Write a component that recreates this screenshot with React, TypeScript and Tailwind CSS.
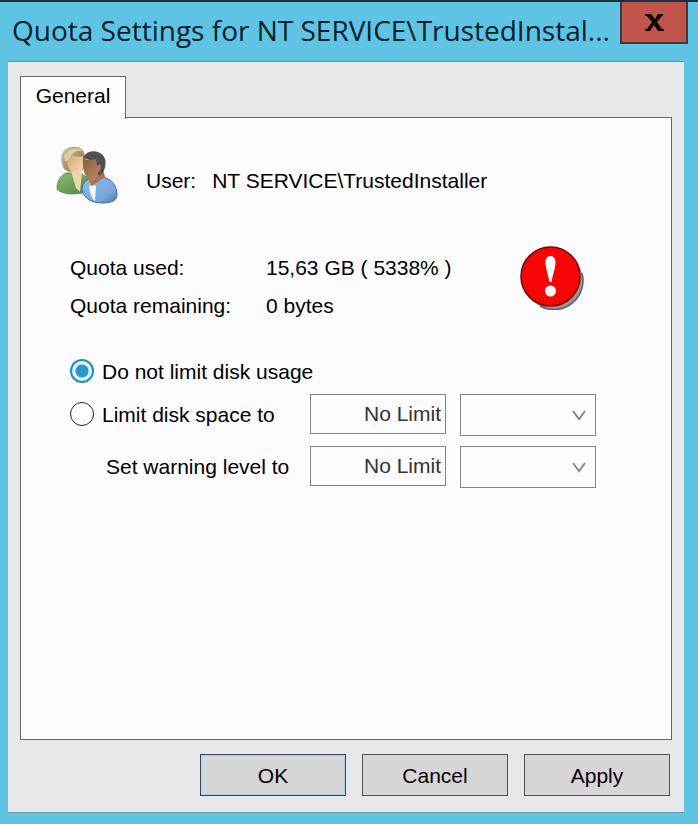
import { useState } from 'react';

const limits = [
  { id: 'limit', label: 'Limit disk space to' },
  { id: 'warning', label: 'Set warning level to' },
];

const UsersIcon = () => (
  <svg viewBox="0 0 62 58" className="h-[58px] w-[62px] shrink-0" aria-hidden="true">
    <defs>
      <linearGradient id="hair" x1="0" y1="0" x2="1" y2="1">
        <stop offset="0" stopColor="#d9c592" />
        <stop offset="1" stopColor="#80683a" />
      </linearGradient>
      <linearGradient id="face" x1="0" y1="0" x2="1" y2="1">
        <stop offset="0" stopColor="#d6a878" />
        <stop offset="1" stopColor="#f6ddb9" />
      </linearGradient>
      <linearGradient id="green" x1="0" y1="0" x2="1" y2="1">
        <stop offset="0" stopColor="#94b979" />
        <stop offset="1" stopColor="#4a8a3d" />
      </linearGradient>
      <linearGradient id="skin" x1="0" y1="0" x2="1" y2="1">
        <stop offset="0" stopColor="#8b5d3e" />
        <stop offset="1" stopColor="#bd8b66" />
      </linearGradient>
      <linearGradient id="blue" x1="0" y1="0" x2="1" y2="1">
        <stop offset="0" stopColor="#8dbbe8" />
        <stop offset="0.7" stopColor="#78a8da" />
        <stop offset="1" stopColor="#4a76ab" />
      </linearGradient>
    </defs>
    <path d="M7 21C4 13 5 6 10 3c5-3 13-3 17 1 2 5 2 13 0 20l-13 2c-3-1-6-2-7-5Z" fill="url(#hair)" />
    <path d="M1 43c0-8 3-13 9-16l14 0 8 5-2 14c-9 3-24 3-29-3Z" fill="url(#green)" stroke="#4c803f" strokeWidth="0.8" />
    <path d="m15 25 5 17 4 4 2-20Z" fill="#e9d8ad" />
    <path d="M11 15c3-1 4-3 5-6 3 2 7 2 11 1v10c0 5-3 8-7 8-5 0-9-7-9-13Z" fill="url(#face)" />
    <path d="M8 10c3-7 13-10 20-5-6-1-11 1-13 5-1 3-3 5-6 5Z" fill="#d8cfaa" />
    <path d="M26 44c0-6 3-9 7-11l14-2c9 2 14 9 14 18 0 5-5 8-14 8-11 0-19-4-21-13Z" fill="url(#blue)" stroke="#456b96" strokeWidth="1" />
    <path d="m33 37 7 3-1 15c-4-3-6-10-6-18Z" fill="#f4f9ff" />
    <path d="m32 27 2 12 2 1 13-9-2-8Z" fill="#a87554" />
    <path d="M27 12c2-6 9-8 15-6 6 2 9 8 7 15-1 5-3 7-6 9l-6-15Z" fill="#54504e" />
    <path d="M27 12c5 3 9 2 13 1l1 7 3-2c2 4 0 7-2 8-1 5-3 8-6 9-7-1-10-13-9-23Z" fill="url(#skin)" />
  </svg>
);

const ErrorIcon = () => (
  <svg viewBox="0 0 64 64" className="size-16 shrink-0" role="img" aria-label="Quota exceeded">
    <circle cx="34" cy="34.5" r="29" fill="#9c9393" />
    <path d="M62 27a29 29 0 0 1-42 33" fill="none" stroke="#625e68" strokeWidth="1.5" />
    <circle cx="30.5" cy="30.5" r="29.5" fill="#f70505" stroke="#700808" strokeWidth="1.5" />
    <path d="M25.5 16c0-8 10-8 10 0 0 7-3 13-4 20h-2c-1-7-4-13-4-20Z" fill="#fff" />
    <circle cx="30.5" cy="45" r="5.5" fill="#fff" />
  </svg>
);

const App = () => {
  const [mode, setMode] = useState('none');

  const radio = (value: string) => (
    <input
      type="radio"
      id={value}
      name="mode"
      checked={mode === value}
      onChange={() => setMode(value)}
      className="size-6 shrink-0 appearance-none rounded-full border border-[#222] bg-white checked:border-2 checked:border-[#238fb5] checked:bg-[radial-gradient(circle,#249bcb_0px,#249bcb_6px,#e3f1fa_7px)]"
    />
  );

  return (
    <main className="flex min-h-screen flex-col border-t-2 border-[#17313d] bg-[#5fc4e4] pr-3.5 pb-[11px] pl-2 font-['Liberation_Sans',Arial,sans-serif] text-[21px] leading-7 text-black">
      <header className="-mr-1 flex h-[59px] shrink-0 items-start justify-between">
        <h1 className="min-w-0 truncate pt-1.5 pl-1 font-['Open_Sans','Noto_Sans',sans-serif] text-[28px] leading-11 text-[#06202c]">
          Quota Settings for NT SERVICE\TrustedInstal...
        </h1>
        <button
          type="button"
          aria-label="Close"
          className="flex h-[42px] w-[68px] shrink-0 items-center justify-center border-2 border-t-0 border-[#45373c] bg-[#c1554b]"
        >
          <svg viewBox="0 0 19 17" className="h-[17px] w-[19px]" aria-hidden="true">
            <path d="M0 0h6l4 5 3-5h5v2h-1l-5 6 5 7h2v2h-6l-4-6-4 6H0v-2h2l5-7-5-6H0Z" fill="#080505" />
          </svg>
        </button>
      </header>

      <div className="flex flex-1 flex-col border-t border-b border-[#6799aa] bg-[#e8e8ea] px-3 pt-3.5 pb-4">
        <div role="tablist" className="flex">
          <button
            type="button"
            role="tab"
            id="tab-general"
            aria-selected="true"
            aria-controls="general"
            className="z-10 -mb-0.5 h-[43px] w-[106px] border border-b-0 border-[#666] bg-[#fdfdfe] pb-1"
          >
            General
          </button>
        </div>

        <section
          id="general"
          role="tabpanel"
          aria-labelledby="tab-general"
          className="flex-1 border border-[#666] bg-[#fcfbfd] px-[35px] pt-7"
        >
          <div className="flex items-center">
            <UsersIcon />
            <p className="ml-7 pt-3">User:</p>
            <p className="ml-4 pt-3">NT SERVICE\TrustedInstaller</p>
          </div>

          <div className="mt-[42px] ml-3.5 flex items-start">
            <dl className="grid grid-cols-[196px_254px] gap-y-2.5 pt-2">
              <dt>Quota used:</dt>
              <dd>15,63 GB ( 5338% )</dd>
              <dt>Quota remaining:</dt>
              <dd>0 bytes</dd>
            </dl>
            <ErrorIcon />
          </div>

          <fieldset aria-label="Disk usage limit" className="mt-9 ml-3.5">
            <div className="flex items-center gap-2">
              {radio('none')}
              <label htmlFor="none" className="pt-0.5">
                Do not limit disk usage
              </label>
            </div>

            <div className="mt-2 flex flex-col gap-2.5">
              {limits.map((row, i) => (
                <div key={row.id} className="flex h-[42px] items-start">
                  <div className="flex h-10 w-60 shrink-0 items-center gap-2">
                    {i === 0 && radio(row.id)}
                    <label htmlFor={i === 0 ? row.id : `${row.id}-value`} className={i === 0 ? 'pt-0.5' : 'pt-0.5 pl-9'}>
                      {row.label}
                    </label>
                  </div>
                  <input
                    id={`${row.id}-value`}
                    aria-label={row.label}
                    defaultValue="No Limit"
                    disabled
                    className="h-10 w-[136px] border border-[#858387] bg-transparent pr-1 text-right text-[#333]"
                  />
                  <div className="relative ml-3.5">
                    <select
                      aria-label={`${row.label} unit`}
                      disabled
                      className="h-[42px] w-[136px] appearance-none border border-[#858387] bg-transparent"
                    />
                    <svg viewBox="0 0 14 11" className="absolute top-4 right-2.5 h-[11px] w-3.5" aria-hidden="true">
                      <path d="m1 1 6 8 6-8" fill="none" stroke="#8b898c" strokeWidth="2" />
                    </svg>
                  </div>
                </div>
              ))}
            </div>
          </fieldset>
        </section>

        <footer className="mt-3.5 flex justify-end gap-4 pr-0.5">
          <button type="submit" className="h-[42px] w-[146px] border border-[#2f4d6b] bg-[#d6d6d6] pt-0.5 shadow-[inset_0_0_0_1px_#a9cfe2]">
            OK
          </button>
          <button type="button" className="h-[42px] w-[146px] border border-[#555257] bg-[#d7d5d8] pt-0.5">
            Cancel
          </button>
          <button type="button" className="h-[42px] w-[146px] border border-[#555257] bg-[#d7d5d8] pt-0.5">
            Apply
          </button>
        </footer>
      </div>
    </main>
  );
};

export default App;
